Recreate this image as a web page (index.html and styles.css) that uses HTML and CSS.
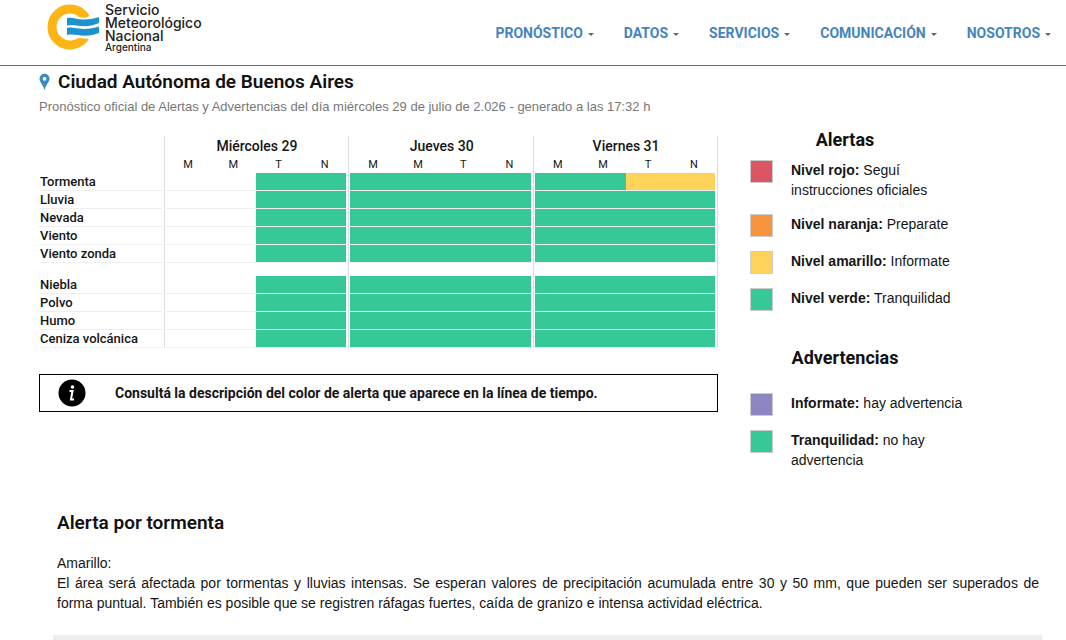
FILE: index.html
```html
<!DOCTYPE html>
<html lang="es">
<head>
    <meta charset="UTF-8">
    <meta name="viewport" content="width=device-width, initial-scale=1.0">
    <title>Alertas - Servicio Meteorológico Nacional</title>
    <link rel="stylesheet" href="styles.css">
</head>
<body>
    <header class="site-header">
        <a class="logo" href="#">
            <svg class="logo-mark" viewBox="0 0 53 48" aria-hidden="true">
                <path d="M38.600 15A18 18 0 1 0 38.900 32.500" fill="none" stroke="#fdb515" stroke-width="9"/>
                <path d="M18 13C28 11 36 19 53 11V36C40 37 32 34 18 34Z" fill="#fff"/>
                <path d="M20 15C27 13 33 20 52 14V20C36 27 30 20 20 22.500Z" fill="#1c93cf"/>
                <path d="M20 25C27 23 33 29 52 23.500V30C36 36 30 30 20 32Z" fill="#1c93cf"/>
            </svg>
            <span class="logo-text">Servicio<br>Meteorológico<br>Nacional<small>Argentina</small></span>
        </a>
        <nav class="menu">
            <a href="#">PRONÓSTICO</a>
            <a href="#">DATOS</a>
            <a href="#">SERVICIOS</a>
            <a href="#">COMUNICACIÓN</a>
            <a href="#">NOSOTROS</a>
        </nav>
    </header>

    <main>
        <div class="overview">
            <section class="forecast">
                <h1>
                    <svg class="pin" viewBox="0 0 12 18" aria-hidden="true">
                        <path d="M6 0A5.500 5.500 0 0 0 .5 5.500C.5 9 4.500 12 6 18C7.500 12 11.500 9 11.500 5.500A5.500 5.500 0 0 0 6 0Z" fill="#3b8ac4"/>
                        <circle cx="6" cy="5.500" r="2" fill="#fff"/>
                    </svg>
                    Ciudad Autónoma de Buenos Aires
                </h1>
                <p class="issued">Pronóstico oficial de Alertas y Advertencias del día miércoles 29 de julio de 2.026 - generado a las 17:32 h</p>

                <table class="timeline">
                    <colgroup>
                        <col class="col-name">
                        <col class="col-first"><col class="col-mid"><col class="col-mid"><col class="col-last">
                        <col class="col-first"><col class="col-mid"><col class="col-mid"><col class="col-last">
                        <col class="col-first"><col class="col-mid"><col class="col-mid"><col class="col-last">
                    </colgroup>
                    <thead>
                        <tr class="days">
                            <td></td>
                            <th class="start" colspan="4">Miércoles 29</th>
                            <th class="start" colspan="4">Jueves 30</th>
                            <th class="start end" colspan="4">Viernes 31</th>
                        </tr>
                        <tr class="periods">
                            <td></td>
                            <th class="start">M</th><th>M</th><th>T</th><th>N</th>
                            <th class="start">M</th><th>M</th><th>T</th><th>N</th>
                            <th class="start">M</th><th>M</th><th>T</th><th class="end">N</th>
                        </tr>
                    </thead>
                    <tbody id="alertas"></tbody>
                    <tbody id="advertencias"></tbody>
                </table>

                <div class="notice">
                    <svg class="info" viewBox="0 0 28 28" aria-hidden="true">
                        <circle cx="14" cy="14" r="13.500" fill="#000"/>
                        <circle cx="14.500" cy="8" r="1.800" fill="#fff"/>
                        <path d="M11.500 12H14.500L13 20.500H16" fill="none" stroke="#fff" stroke-width="2"/>
                    </svg>
                    <strong>Consultá la descripción del color de alerta que aparece en la línea de tiempo.</strong>
                </div>
            </section>

            <aside class="legend">
                <h2>Alertas</h2>
                <ul>
                    <li><span class="swatch rojo"></span><p><b>Nivel rojo:</b> Seguí instrucciones oficiales</p></li>
                    <li><span class="swatch naranja"></span><p><b>Nivel naranja:</b> Preparate</p></li>
                    <li><span class="swatch amarillo"></span><p><b>Nivel amarillo:</b> Informate</p></li>
                    <li><span class="swatch verde"></span><p><b>Nivel verde:</b> Tranquilidad</p></li>
                </ul>
                <h2 class="second">Advertencias</h2>
                <ul>
                    <li><span class="swatch violeta"></span><p><b>Informate:</b> hay advertencia</p></li>
                    <li><span class="swatch verde"></span><p><b>Tranquilidad:</b> no hay advertencia</p></li>
                </ul>
            </aside>
        </div>

        <article class="detail">
            <h2>Alerta por tormenta</h2>
            <p>Amarillo:<br>El área será afectada por tormentas y lluvias intensas. Se esperan valores de precipitación acumulada entre 30 y 50 mm, que pueden ser superados de forma puntual. También es posible que se registren ráfagas fuertes, caída de granizo e intensa actividad eléctrica.</p>
        </article>
        <hr>
    </main>

    <script>
        // v = verde, a = amarillo, - = sin dato
        const alertas = {
            'Tormenta': '--vvvvvvvvaa',
            'Lluvia': '--vvvvvvvvvv',
            'Nevada': '--vvvvvvvvvv',
            'Viento': '--vvvvvvvvvv',
            'Viento zonda': '--vvvvvvvvvv'
        };
        const advertencias = {
            'Niebla': '--vvvvvvvvvv',
            'Polvo': '--vvvvvvvvvv',
            'Humo': '--vvvvvvvvvv',
            'Ceniza volcánica': '--vvvvvvvvvv'
        };
        const colores = { 'v': 'verde', 'a': 'amarillo', '-': 'vacio' };

        function renderRows(id, data) {
            let html = '';
            for (const name in data) {
                html += `<tr><th scope="row"><span class="name">${name}</span></th>`;
                data[name].split('').forEach((nivel, i) => {
                    const clases = [];
                    if (i % 4 === 0) clases.push('start');
                    if (i % 4 === 3) clases.push('last');
                    if (i === 11) clases.push('end');
                    html += `<td class="${clases.join(' ')}"><span class="level ${colores[nivel]}"></span></td>`;
                });
                html += '</tr>';
            }
            document.getElementById(id).innerHTML = html;
        }

        // blank row between both groups keeps the day lines continuous
        function addSpacer(id) {
            let html = '<tr class="spacer"><td></td>';
            for (let i = 0; i < 3; i++) {
                html += `<td class="start ${i === 2 ? 'end' : ''}" colspan="4"></td>`;
            }
            document.getElementById(id).insertAdjacentHTML('beforeend', html + '</tr>');
        }

        renderRows('alertas', alertas);
        addSpacer('alertas');
        renderRows('advertencias', advertencias);
    </script>
</body>
</html>
```
FILE: styles.css
```css
* {
    box-sizing: border-box;
}

body {
    margin: 0;
    background-color: #fff;
    color: #151515;
    font-family: "Liberation Sans", Arial, sans-serif;
    font-size: 14px;
    line-height: 20px;
}

h1, h2, p, ul {
    margin: 0;
    padding: 0;
}

.site-header {
    display: flex;
    justify-content: space-between;
    align-items: flex-start;
    height: 66px;
    padding: 3px 15px 0 47px;
    border-bottom: 1px solid #4a7192;
}

.logo {
    display: flex;
    gap: 5px;
    color: #222;
    text-decoration: none;
}

.logo-mark {
    width: 53px;
    height: 48px;
}

.logo-text {
    font-family: Inter, sans-serif;
    font-size: 14px;
    font-weight: 500;
    line-height: 13px;
}

.logo-text small {
    display: block;
    font-size: 10px;
    line-height: 10px;
}

.menu {
    display: flex;
    gap: 30px;
    padding-top: 20px;
}

.menu a {
    display: flex;
    align-items: center;
    gap: 5px;
    color: #4584bd;
    font-family: Roboto, sans-serif;
    font-weight: 700;
    text-decoration: none;
}

.menu a::after {
    content: "";
    margin-top: 2px;
    border: 3px solid transparent;
    border-top-color: #666;
    border-bottom: 0;
}

.overview {
    display: flex;
    padding: 0 94px 0 39px;
}

.forecast {
    flex: 1;
    padding-top: 4px;
}

h1, h2 {
    color: #111;
    font-family: Roboto, sans-serif;
    font-size: 19px;
    font-weight: 600;
    line-height: 24px;
}

h1 {
    display: flex;
    align-items: center;
    gap: 8px;
}

.pin {
    width: 11px;
    height: 18px;
}

.issued {
    margin-top: 3px;
    color: #777;
    font-size: 13px;
}

.timeline {
    width: 100%;
    margin-top: 19px;
    border-spacing: 0;
    table-layout: fixed;
    font-family: Roboto, sans-serif;
}

.timeline th,
.timeline td {
    padding: 0;
}

.col-name {
    width: 124px;
}

.col-first {
    width: 47px;
}

.col-mid {
    width: 45px;
}

.col-last {
    width: 47px;
}

.timeline .start {
    padding-left: 1px;
    border-left: 1px solid #ddd;
}

.timeline .last {
    padding-right: 2px;
}

.timeline .end {
    border-right: 1px solid #ddd;
}

.days th {
    height: 21px;
    font-size: 14px;
    font-weight: 500;
    line-height: 21px;
}

.periods th {
    height: 16px;
    font-size: 11px;
    font-weight: 400;
    line-height: 16px;
}

.name,
.level {
    display: block;
    height: 18px;
    border-bottom: 1px solid #eee;
}

.name {
    margin-right: 2px;
    padding-left: 1px;
    font-size: 13px;
    font-weight: 500;
    line-height: 18px;
    text-align: left;
}

.spacer td {
    height: 13px;
}

.rojo {
    background-color: #dc5564;
}

.naranja {
    background-color: #f6953d;
}

.amarillo {
    background-color: #ffd25a;
}

.verde {
    background-color: #36c896;
}

.violeta {
    background-color: #8c86c3;
}

.notice {
    display: flex;
    align-items: center;
    gap: 29px;
    margin-top: 26px;
    padding: 4px 18px;
    border: 1px solid #000;
    font-family: Roboto, sans-serif;
}

.notice strong {
    font-weight: 700;
}

.info {
    width: 28px;
    height: 28px;
}

.legend {
    width: 254px;
    padding-top: 62px;
}

.legend h2 {
    font-size: 18px;
    font-weight: 700;
    text-align: center;
}

.legend ul {
    display: flex;
    flex-direction: column;
    gap: 14px;
    margin-top: 8px;
    padding-left: 32px;
    list-style: none;
}

.legend .second {
    margin: 35px 0 23px;
}

.legend li {
    display: flex;
    gap: 18px;
}

.legend li p {
    flex: 1;
}

.swatch {
    width: 23px;
    height: 23px;
    border: 1px solid #ccc;
}

.detail {
    margin-top: 41px;
    padding: 0 27px 0 57px;
    text-align: justify;
}

.detail p {
    margin-top: 18px;
}

hr {
    height: 5px;
    margin: 22px 24px 0 53px;
    border: 0;
    background-color: #eee;
}
```
